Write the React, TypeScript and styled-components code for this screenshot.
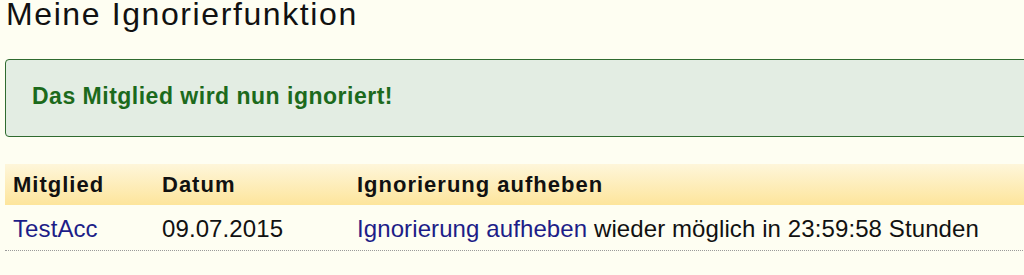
import React from "react"
import styled, { createGlobalStyle } from "styled-components"

const GlobalStyle = createGlobalStyle`
  html, body {
    margin: 0;
    padding: 0;
    background: #fefef2;
    overflow: hidden;
  }
  body {
    font-family: "Liberation Sans", Arial, sans-serif;
    color: #111;
  }
`

const Page = styled.div`
  width: 1100px;
  padding: 0 0 0 5px;
`

const Title = styled.h1`
  margin: 0 0 0 1px;
  font-size: 32px;
  line-height: 28px;
  font-weight: normal;
  letter-spacing: 1.6px;
  color: #111;
`

const Notice = styled.div`
  box-sizing: border-box;
  margin-top: 31px;
  height: 78px;
  display: flex;
  align-items: center;
  padding: 0 0 4px 26px;
  background: #e3ede3;
  border: 1px solid #2f6b2f;
  border-radius: 4px;
  color: #1c6a1c;
  font-size: 23px;
  font-weight: bold;
  letter-spacing: 0.5px;
`

const Table = styled.div`
  margin-top: 27px;
`

const Row = styled.div<{ $head?: boolean }>`
  display: grid;
  grid-template-columns: 149px 195px 1fr;
  align-items: center;
  height: ${p => (p.$head ? "41px" : "43px")};
  padding-top: ${p => (p.$head ? "0" : "2px")};
  box-sizing: ${p => (p.$head ? "border-box" : "content-box")};
  background: ${p => (p.$head ? "linear-gradient(#fef6da, #fde59c)" : "transparent")};
  border-bottom: ${p => (p.$head ? "none" : "1px dotted #9a9a9a")};
  font-size: ${p => (p.$head ? "22px" : "24px")};
  font-weight: ${p => (p.$head ? "bold" : "normal")};
  letter-spacing: ${p => (p.$head ? "1px" : "0.1px")};
`

const Cell = styled.div`
  padding-left: 8px;
  white-space: nowrap;
`

const Link = styled.a`
  color: #1d1d88;
  text-decoration: none;
`

const App: React.FC = () => (
  <Page>
    <GlobalStyle />
    <Title>Meine Ignorierfunktion</Title>
    <Notice>Das Mitglied wird nun ignoriert!</Notice>
    <Table>
      <Row $head>
        <Cell>Mitglied</Cell>
        <Cell>Datum</Cell>
        <Cell>Ignorierung aufheben</Cell>
      </Row>
      <Row>
        <Cell>
          <Link href="#">TestAcc</Link>
        </Cell>
        <Cell>09.07.2015</Cell>
        <Cell>
          <Link href="#">Ignorierung aufheben</Link> wieder möglich in 23:59:58 Stunden
        </Cell>
      </Row>
    </Table>
  </Page>
)

export default App
